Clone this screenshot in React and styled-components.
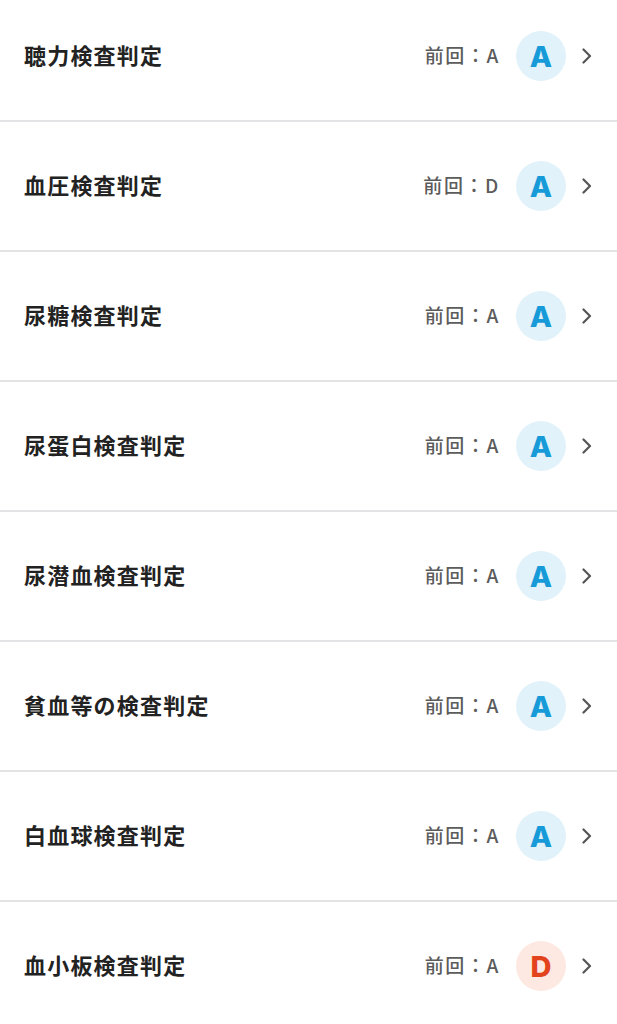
import React from 'react'
import styled, { createGlobalStyle } from 'styled-components'

const GlobalStyle = createGlobalStyle`
  html, body {
    margin: 0;
    padding: 0;
    background: #fff;
    font-family: "Noto Sans CJK JP", "Noto Sans", sans-serif;
  }
`

const List = styled.ul`
  list-style: none;
  margin: -8px 0 0;
  padding: 0;
`

const Row = styled.li`
  display: flex;
  align-items: center;
  height: 128px;
  padding: 0 24px 0 24px;
  border-bottom: 2px solid #e3e3e6;
`

const Title = styled.span`
  flex: 1;
  font-size: 22px;
  line-height: 1;
  font-weight: 700;
  letter-spacing: 1.2px;
  color: #222;
  margin-bottom: 4px;
`

const Previous = styled.span`
  font-size: 19px;
  line-height: 1;
  font-weight: 500;
  color: #5c5c5c;
  letter-spacing: 1.6px;
  margin: 0 16px 3px 0;
`

const Grade = styled.span`
  width: 50px;
  height: 50px;
  border-radius: 50%;
  display: flex;
  align-items: center;
  justify-content: center;
  font-family: Inter, "Liberation Sans", sans-serif;
  font-size: 29px;
  font-weight: 800;
  background: ${p => (p.$grade === 'D' ? '#fde8e2' : '#e2f2fa')};
  color: ${p => (p.$grade === 'D' ? '#e2431c' : '#169bd8')};
`

const Chevron = styled.svg`
  margin-left: 16px;
  width: 11px;
  height: 16px;
`

const items = [
  { title: '聴力検査判定', prev: 'A', grade: 'A' },
  { title: '血圧検査判定', prev: 'D', grade: 'A' },
  { title: '尿糖検査判定', prev: 'A', grade: 'A' },
  { title: '尿蛋白検査判定', prev: 'A', grade: 'A' },
  { title: '尿潜血検査判定', prev: 'A', grade: 'A' },
  { title: '貧血等の検査判定', prev: 'A', grade: 'A' },
  { title: '白血球検査判定', prev: 'A', grade: 'A' },
  { title: '血小板検査判定', prev: 'A', grade: 'D' },
]

export default function App() {
  return (
    <>
      <GlobalStyle />
      <List>
        {items.map((it, i) => (
          <Row key={i}>
            <Title>{it.title}</Title>
            <Previous>前回：{it.prev}</Previous>
            <Grade $grade={it.grade}>{it.grade}</Grade>
            <Chevron viewBox="0 0 11 16" fill="none">
              <polyline
                points="1.5,1.5 8,8 1.5,14.5"
                stroke="#555"
                strokeWidth="2.2"
                strokeLinecap="round"
                strokeLinejoin="round"
              />
            </Chevron>
          </Row>
        ))}
      </List>
    </>
  )
}
